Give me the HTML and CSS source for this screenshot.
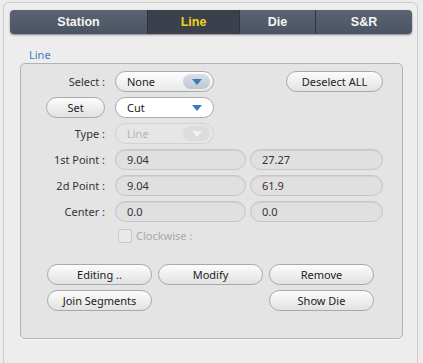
FILE: index.html
```html
<!DOCTYPE html>
<html>
<head>
<meta charset="utf-8">
<link rel="stylesheet" href="styles.css">
</head>
<body>
<div class="window">
  <div class="tabs">
    <div class="tab t-station">Station</div>
    <div class="tab t-line active">Line</div>
    <div class="tab t-die">Die</div>
    <div class="tab t-sr">S&amp;R</div>
  </div>
  <div class="group-title">Line</div>
  <div class="group">
    <div class="row">
      <div class="label">Select :</div>
      <div class="cell c2">
        <div class="combo"><span>None</span><span class="arrow"><i></i></span></div>
      </div>
      <div class="cell c3 right">
        <div class="btn btn-deselect">Deselect ALL</div>
      </div>
    </div>
    <div class="row">
      <div class="label"><div class="btn btn-set">Set</div></div>
      <div class="cell c2">
        <div class="combo white"><span>Cut</span><span class="arrow"><i></i></span></div>
      </div>
    </div>
    <div class="row">
      <div class="label">Type :</div>
      <div class="cell c2">
        <div class="combo disabled"><span>Line</span><span class="arrow"><i></i></span></div>
      </div>
    </div>
    <div class="row">
      <div class="label">1st Point :</div>
      <div class="cell c2"><div class="field">9.04</div></div>
      <div class="cell c3"><div class="field">27.27</div></div>
    </div>
    <div class="row">
      <div class="label">2d Point :</div>
      <div class="cell c2"><div class="field">9.04</div></div>
      <div class="cell c3"><div class="field">61.9</div></div>
    </div>
    <div class="row">
      <div class="label">Center :</div>
      <div class="cell c2"><div class="field">0.0</div></div>
      <div class="cell c3"><div class="field">0.0</div></div>
    </div>
    <div class="row check-row">
      <div class="label"></div>
      <div class="cell c2 check"><span class="box"></span><span class="check-text">Clockwise :</span></div>
    </div>
    <div class="buttons">
      <div class="btn">Editing ..</div>
      <div class="btn">Modify</div>
      <div class="btn">Remove</div>
      <div class="btn">Join Segments</div>
      <div class="spacer"></div>
      <div class="btn">Show Die</div>
    </div>
  </div>
</div>
</body>
</html>
```
FILE: styles.css
```css
* { box-sizing: border-box; }
html, body { margin: 0; padding: 0; }
body {
  background: #ececec;
  font-family: "Noto Sans", "DejaVu Sans", sans-serif;
  font-size: 11px;
  color: #2a2a2a;
  width: 423px;
  height: 363px;
  overflow: hidden;
}
.window {
  margin: 2px 5px 0 3px;
  height: 370px;
  border: 1px solid #cdcdcd;
  border-bottom: none;
  border-radius: 6px 6px 0 0;
  background: #ededed;
  padding: 7px 5px 0 6px;
}
.tabs {
  display: flex;
  height: 24px;
  border-radius: 4px;
  background: linear-gradient(#5a6371, #4b5462);
  box-shadow: 0 1px 2px rgba(0,0,0,0.45);
  overflow: hidden;
  font-family: "Liberation Sans", Arial, sans-serif;
  font-weight: bold;
  font-size: 12.5px;
  color: #f5f5f5;
}
.tab {
  display: flex;
  align-items: center;
  justify-content: center;
  border-left: 1px solid #2f353e;
}
.tab:first-child { border-left: none; }
.t-station { width: 137px; }
.t-line { width: 92px; }
.t-die { width: 76px; }
.t-sr { flex: 1; }
.tab.active {
  background: #3a414c;
  color: #f3d61c;
}
.group-title {
  margin: 12px 0 0 19px;
  height: 17px;
  line-height: 17px;
  color: #3f80b8;
  font-size: 11px;
}
.group {
  margin-left: 10px;
  width: 383px;
  height: 276px;
  border: 1px solid #b3b3b3;
  border-radius: 5px;
  background: #e4e4e4;
  box-shadow: 0 1px 0 #fafafa;
  padding: 7px 19px 0 5px;
}
.row {
  display: flex;
  height: 21px;
  margin-bottom: 5px;
  align-items: center;
}
.label {
  width: 79px;
  margin-right: 10px;
  text-align: right;
  display: flex;
  justify-content: flex-end;
  align-items: center;
  color: #333;
}
.cell { display: flex; align-items: center; }
.c2 { width: 131px; margin-right: 4px; }
.c3 { width: 133px; }
.right { justify-content: flex-end; }
.combo {
  width: 99px;
  height: 21px;
  border: 1px solid #a9a9a9;
  border-radius: 11px;
  background: linear-gradient(#fdfdfd, #e9e9e9);
  display: flex;
  align-items: center;
  justify-content: space-between;
  padding: 0 3px 0 11px;
  color: #222;
}
.combo.white { background: #fff; }
.combo .arrow {
  width: 27px;
  height: 15px;
  border-radius: 8px;
  background: linear-gradient(#d9dee7, #bfc7d3);
  display: flex;
  align-items: center;
  justify-content: center;
}
.combo.white .arrow { background: #fff; }
.combo .arrow i {
  width: 0; height: 0;
  border-left: 5px solid transparent;
  border-right: 5px solid transparent;
  border-top: 6px solid #3c7bb5;
}
.combo.disabled {
  border-color: #d2d2d2;
  background: #e6e6e6;
  color: #b5b5b5;
}
.combo.disabled .arrow { background: #dcdcdc; }
.combo.disabled .arrow i { border-top-color: #f2f2f2; }
.btn {
  height: 21px;
  border: 1px solid #a8a8a8;
  border-radius: 11px;
  background: linear-gradient(#fcfcfc, #e2e2e2);
  display: flex;
  align-items: center;
  justify-content: center;
  color: #222;
  white-space: nowrap;
}
.btn-deselect { width: 97px; }
.btn-set { width: 59px; }
.field {
  width: 100%;
  height: 21px;
  border: 1px solid #c5c5c5;
  border-radius: 11px;
  background: #e0e0e0;
  box-shadow: inset 0 1px 1px rgba(0,0,0,0.07);
  display: flex;
  align-items: center;
  padding-left: 11px;
  color: #333;
}
.check-row { height: 17px; margin-top: 1px; margin-bottom: 0; }
.check { padding-left: 3px; }
.box {
  width: 14px;
  height: 14px;
  border: 1px solid #c9c9c9;
  border-radius: 2px;
  background: #e9e9e9;
  margin-right: 4px;
}
.check-text { color: #a9a9a9; }
.buttons {
  margin: 20px 0 0 21px;
  display: grid;
  grid-template-columns: 105px 105px 105px;
  column-gap: 6px;
  row-gap: 5px;
}
```
